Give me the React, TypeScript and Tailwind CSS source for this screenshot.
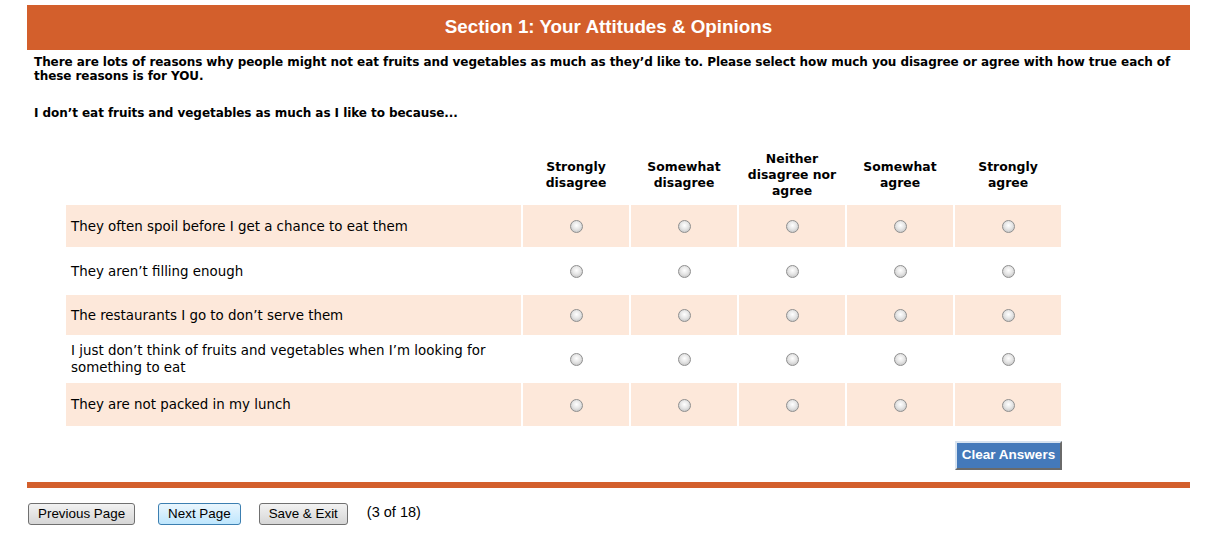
import React from 'react'

const options = [
  'Strongly disagree',
  'Somewhat disagree',
  'Neither disagree nor agree',
  'Somewhat agree',
  'Strongly agree',
]

const statements = [
  { text: 'They often spoil before I get a chance to eat them', row: 'h-[42px] bg-[#fde8da]' },
  { text: 'They aren’t filling enough', row: 'h-[44px] bg-white' },
  { text: 'The restaurants I go to don’t serve them', row: 'h-[40px] bg-[#fde8da]' },
  { text: 'I just don’t think of fruits and vegetables when I’m looking for something to eat', row: 'h-[44px] bg-white' },
  { text: 'They are not packed in my lunch', row: 'h-[43px] bg-[#fde8da]' },
]

function Radio() {
  return (
    <span className="inline-block h-[13px] w-[13px] rounded-full border border-[#8f8f8f] bg-[radial-gradient(circle_at_50%_40%,#ffffff_0%,#e6e6e6_45%,#b9b9b9_100%)] align-middle" />
  )
}

function NavButton({ label, active }: { label: string; active?: boolean }) {
  return (
    <button
      className={
        active
          ? 'h-[22px] rounded-[3px] border border-[#3c7fb1] bg-gradient-to-b from-[#eaf6fd] to-[#bee6fd] px-[9px] font-["Liberation_Sans",Arial,sans-serif] text-[13.4px] leading-none text-black'
          : 'h-[22px] rounded-[3px] border border-[#707070] bg-gradient-to-b from-[#f2f2f2] to-[#d6d6d6] px-[9px] font-["Liberation_Sans",Arial,sans-serif] text-[13.4px] leading-none text-black'
      }
    >
      {label}
    </button>
  )
}

export default function App() {
  return (
    <div className="min-h-[535px] bg-white pt-[5px] font-['DejaVu_Sans',Verdana,sans-serif] text-black">
      <div className="ml-[27px] w-[1163px]">
        <div className="flex h-[45px] items-center justify-center bg-[#d35f2c] font-['Liberation_Sans',Arial,sans-serif] text-[18.8px] font-bold text-white">
          Section 1: Your Attitudes &amp; Opinions
        </div>

        <div className="px-[7px]">
          <p className="mt-[5px] text-[12px] font-bold leading-[14px] tracking-[-0.06px]">
            There are lots of reasons why people might not eat fruits and vegetables as much as they’d like to. Please select how much you disagree or agree with how true each of these reasons is for YOU.
          </p>
          <p className="mt-[23px] text-[12px] font-bold leading-[14px] tracking-[-0.06px]">
            I don’t eat fruits and vegetables as much as I like to because...
          </p>
        </div>

        <table className="ml-[37px] mt-[27px] border-separate border-spacing-[2px]">
          <thead>
            <tr className="h-[54px]">
              <th className="w-[455px]" />
              {options.map((o) => (
                <th key={o} className="w-[106px] px-1 pb-[3px] align-middle text-[12.4px] font-bold leading-[16px]">
                  {o}
                </th>
              ))}
            </tr>
          </thead>
          <tbody>
            {statements.map((s) => (
              <tr key={s.text} className={s.row}>
                <td className="pl-[5px] pr-8 text-[13.4px] leading-[17px]">{s.text}</td>
                {options.map((o) => (
                  <td key={o} className="text-center align-middle">
                    <Radio />
                  </td>
                ))}
              </tr>
            ))}
          </tbody>
        </table>

        <div className="mt-[13px] flex w-[1035px] justify-end">
          <button className="h-[29px] w-[107px] border-2 border-t-[#d7e3f0] border-l-[#d7e3f0] border-r-[#6a6a6a] border-b-[#6a6a6a] bg-[#4479ba] font-['Liberation_Sans',Arial,sans-serif] text-[13.5px] font-bold text-white">
            Clear Answers
          </button>
        </div>

        <div className="mt-[12px] h-[6px] bg-[#d35f2c]" />

        <div className="mt-[13px] flex items-center">
          <div className="ml-[1px]">
            <NavButton label="Previous Page" />
          </div>
          <div className="ml-[23px]">
            <NavButton label="Next Page" active />
          </div>
          <div className="ml-[18px]">
            <NavButton label="Save & Exit" />
          </div>
          <span className="ml-[19px] font-['Liberation_Sans',Arial,sans-serif] text-[14.5px]">(3 of 18)</span>
        </div>
      </div>
    </div>
  )
}
